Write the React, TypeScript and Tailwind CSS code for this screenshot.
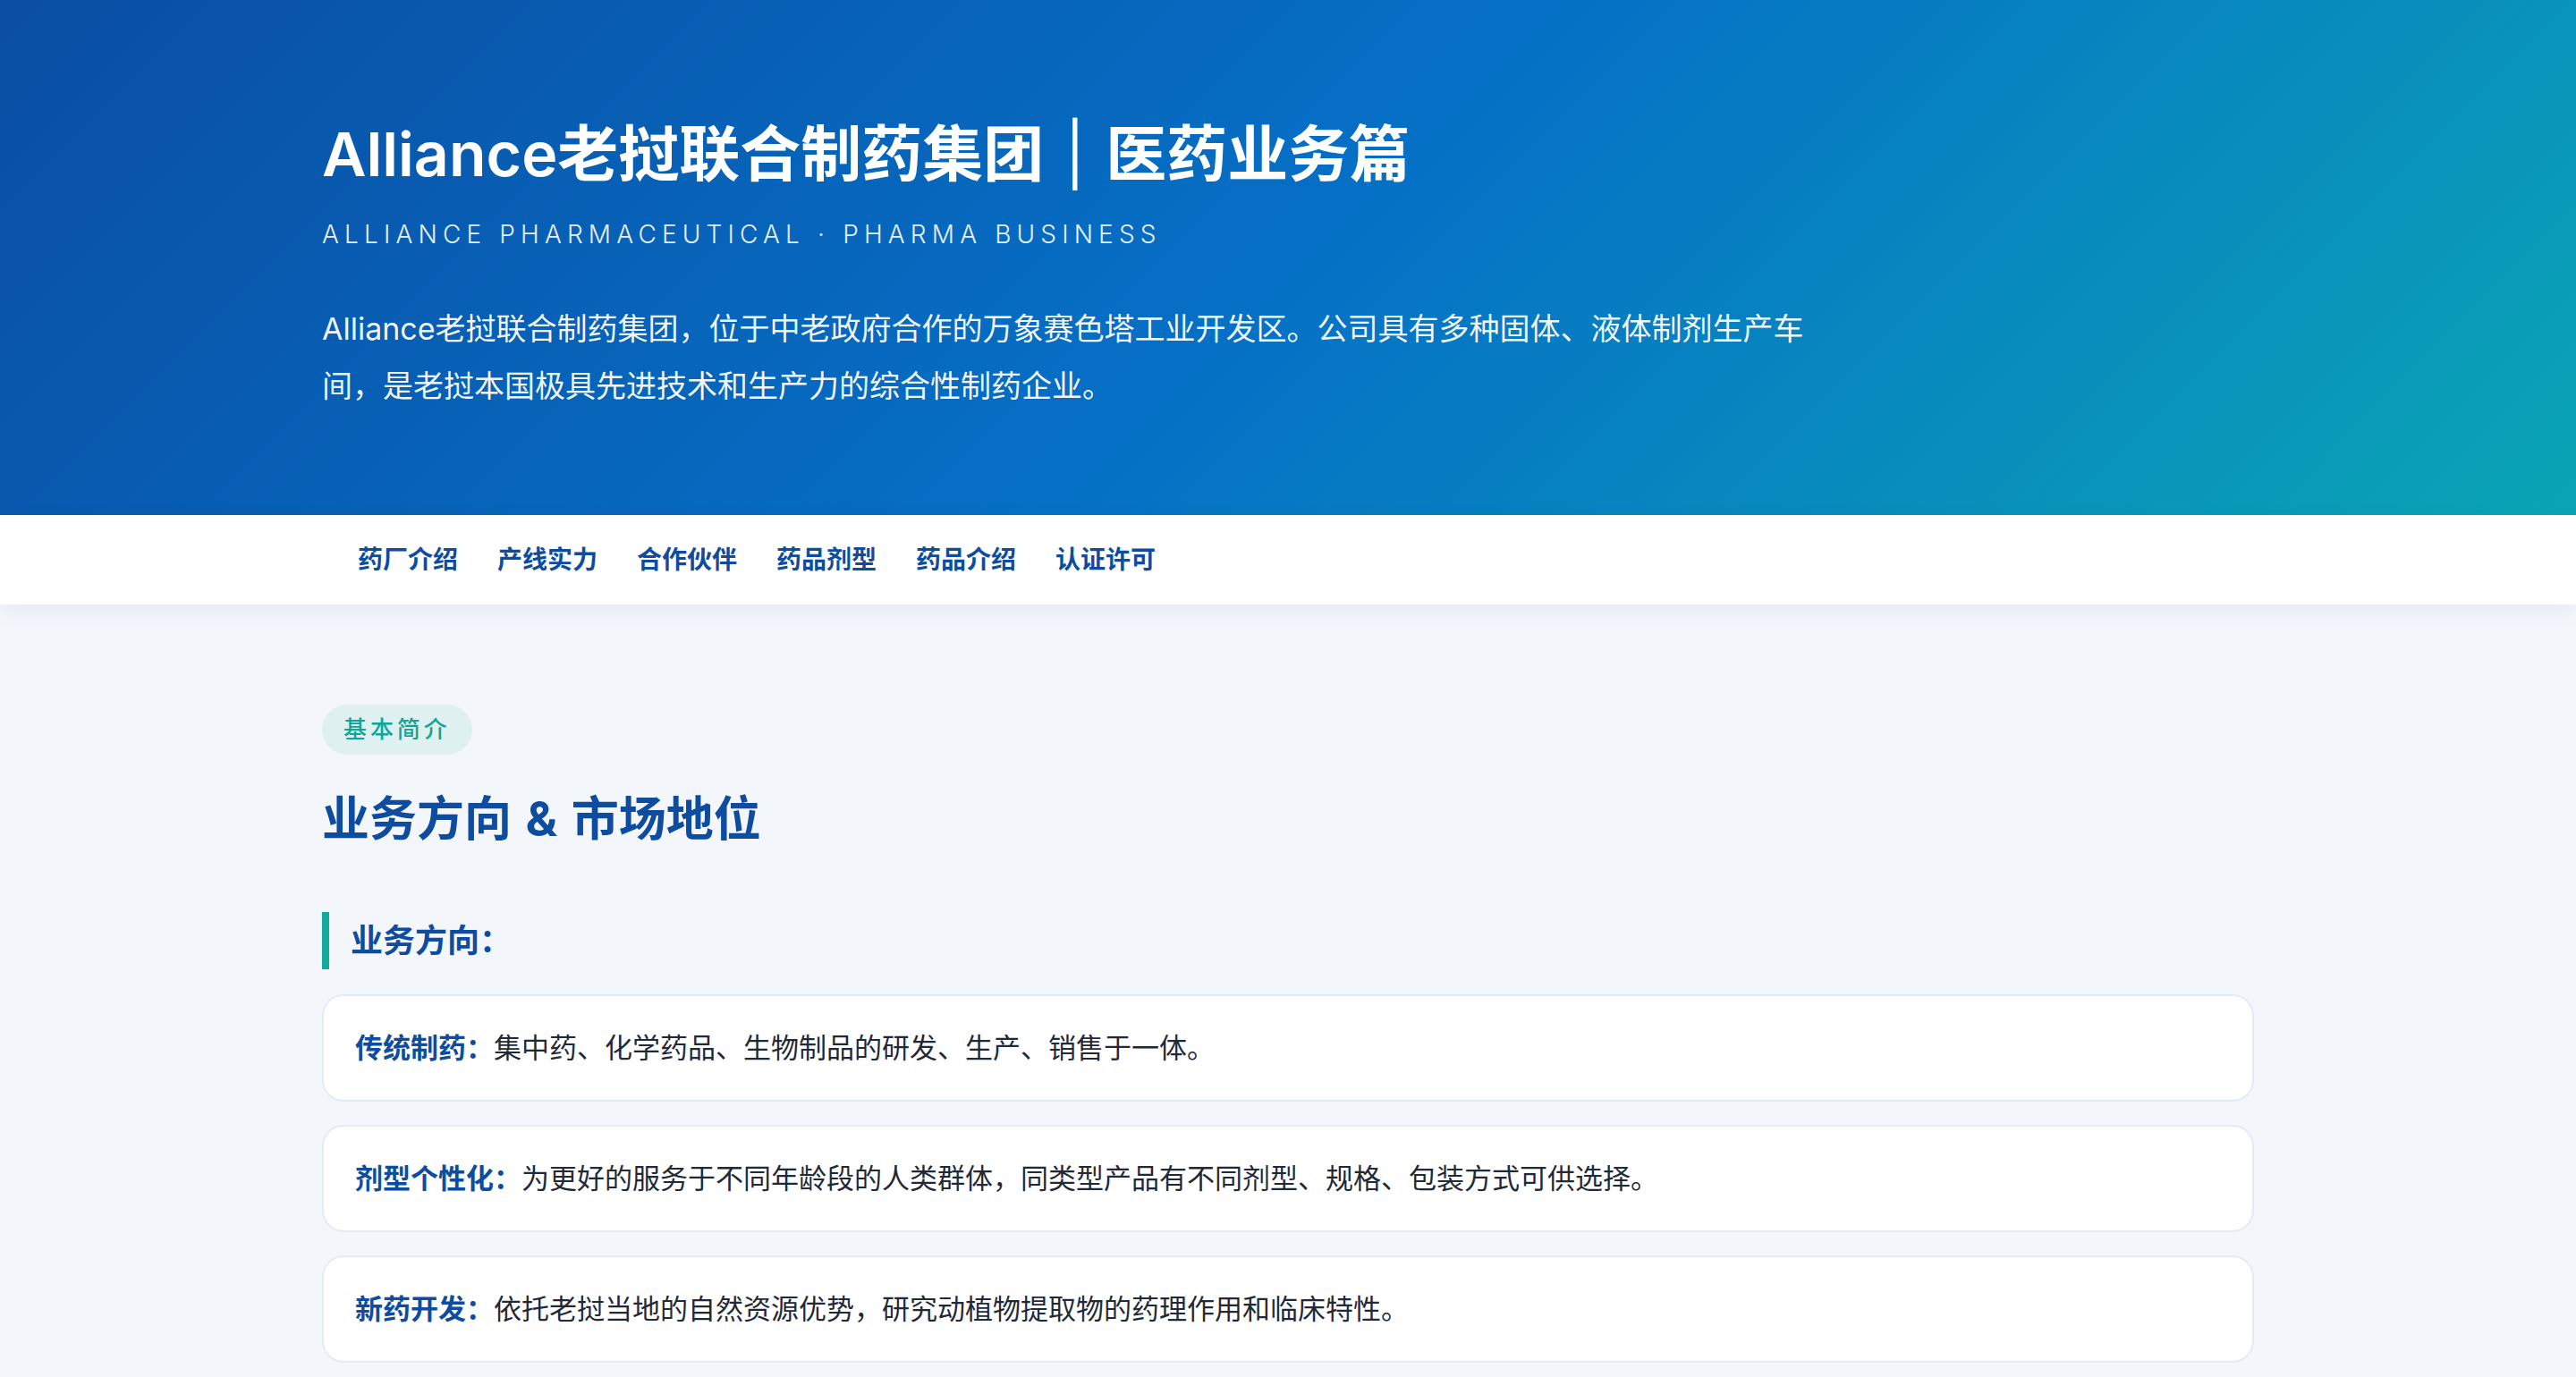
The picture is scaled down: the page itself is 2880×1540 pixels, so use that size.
import React from 'react';

const NAV_ITEMS = ['药厂介绍', '产线实力', '合作伙伴', '药品剂型', '药品介绍', '认证许可'];

const DIRECTIONS = [
  { label: '传统制药', text: '集中药、化学药品、生物制品的研发、生产、销售于一体。' },
  { label: '剂型个性化', text: '为更好的服务于不同年龄段的人类群体，同类型产品有不同剂型、规格、包装方式可供选择。' },
  { label: '新药开发', text: '依托老挝当地的自然资源优势，研究动植物提取物的药理作用和临床特性。' },
];

export default function App() {
  return (
    <div className="min-h-screen bg-[#f3f6fb] font-['Inter','Noto_Sans_CJK_SC',sans-serif]">
      <header className="bg-[linear-gradient(135deg,#0a4ea3_0%,#0570c6_50%,#0aa5b5_100%)] text-white">
        <div className="mx-auto max-w-[2160px] pt-[128px] pb-[112px]">
          <h1 className="text-[68px] font-semibold leading-[88px]">
            Alliance老挝联合制药集团 <span className="mx-[6px] font-normal">|</span> 医药业务篇
          </h1>
          <div className="mt-[26px] text-[28px] font-light leading-[40px] tracking-[0.22em] text-white/90">
            ALLIANCE PHARMACEUTICAL · PHARMA BUSINESS
          </div>
          <p className="mt-[54px] max-w-[1680px] text-[34px] leading-[64px] text-white/95">
            Alliance老挝联合制药集团，位于中老政府合作的万象赛色塔工业开发区。公司具有多种固体、液体制剂生产车间，是老挝本国极具先进技术和生产力的综合性制药企业。
          </p>
        </div>
      </header>

      <nav className="bg-white shadow-[0_8px_24px_rgba(15,60,120,0.06)]">
        <div className="mx-auto flex h-[100px] max-w-[2160px] items-center gap-[44px] pl-10">
          {NAV_ITEMS.map((item) => (
            <a key={item} className="text-[28px] font-semibold text-[#0d4c9e]">
              {item}
            </a>
          ))}
        </div>
      </nav>

      <main className="mx-auto max-w-[2160px] pt-28 pb-20">
        <span className="inline-block rounded-full bg-[#dff0f0] px-6 py-2 text-[26px] font-medium leading-[40px] tracking-[0.15em] text-[#12a594]">
          基本简介
        </span>
        <h2 className="mt-[36px] text-[53px] font-bold leading-[72px] text-[#0d4c9e]">
          业务方向 <span className="mx-[3px]">&amp;</span> 市场地位
        </h2>

        <h3 className="mt-[68px] flex h-16 items-center border-l-8 border-[#12a99a] pl-6 text-[36px] font-semibold text-[#0d4c9e]">
          业务方向：
        </h3>

        <div className="mt-[28px] flex flex-col gap-[26px]">
          {DIRECTIONS.map((d) => (
            <div
              key={d.label}
              className="rounded-3xl border-2 border-[#e3ebf6] bg-white px-[35px] py-[34px] text-[31px] leading-[48px] text-[#1f2937]"
            >
              <strong className="font-bold text-[#0d4c9e]">{d.label}：</strong>
              {d.text}
            </div>
          ))}
        </div>
      </main>
    </div>
  );
}
